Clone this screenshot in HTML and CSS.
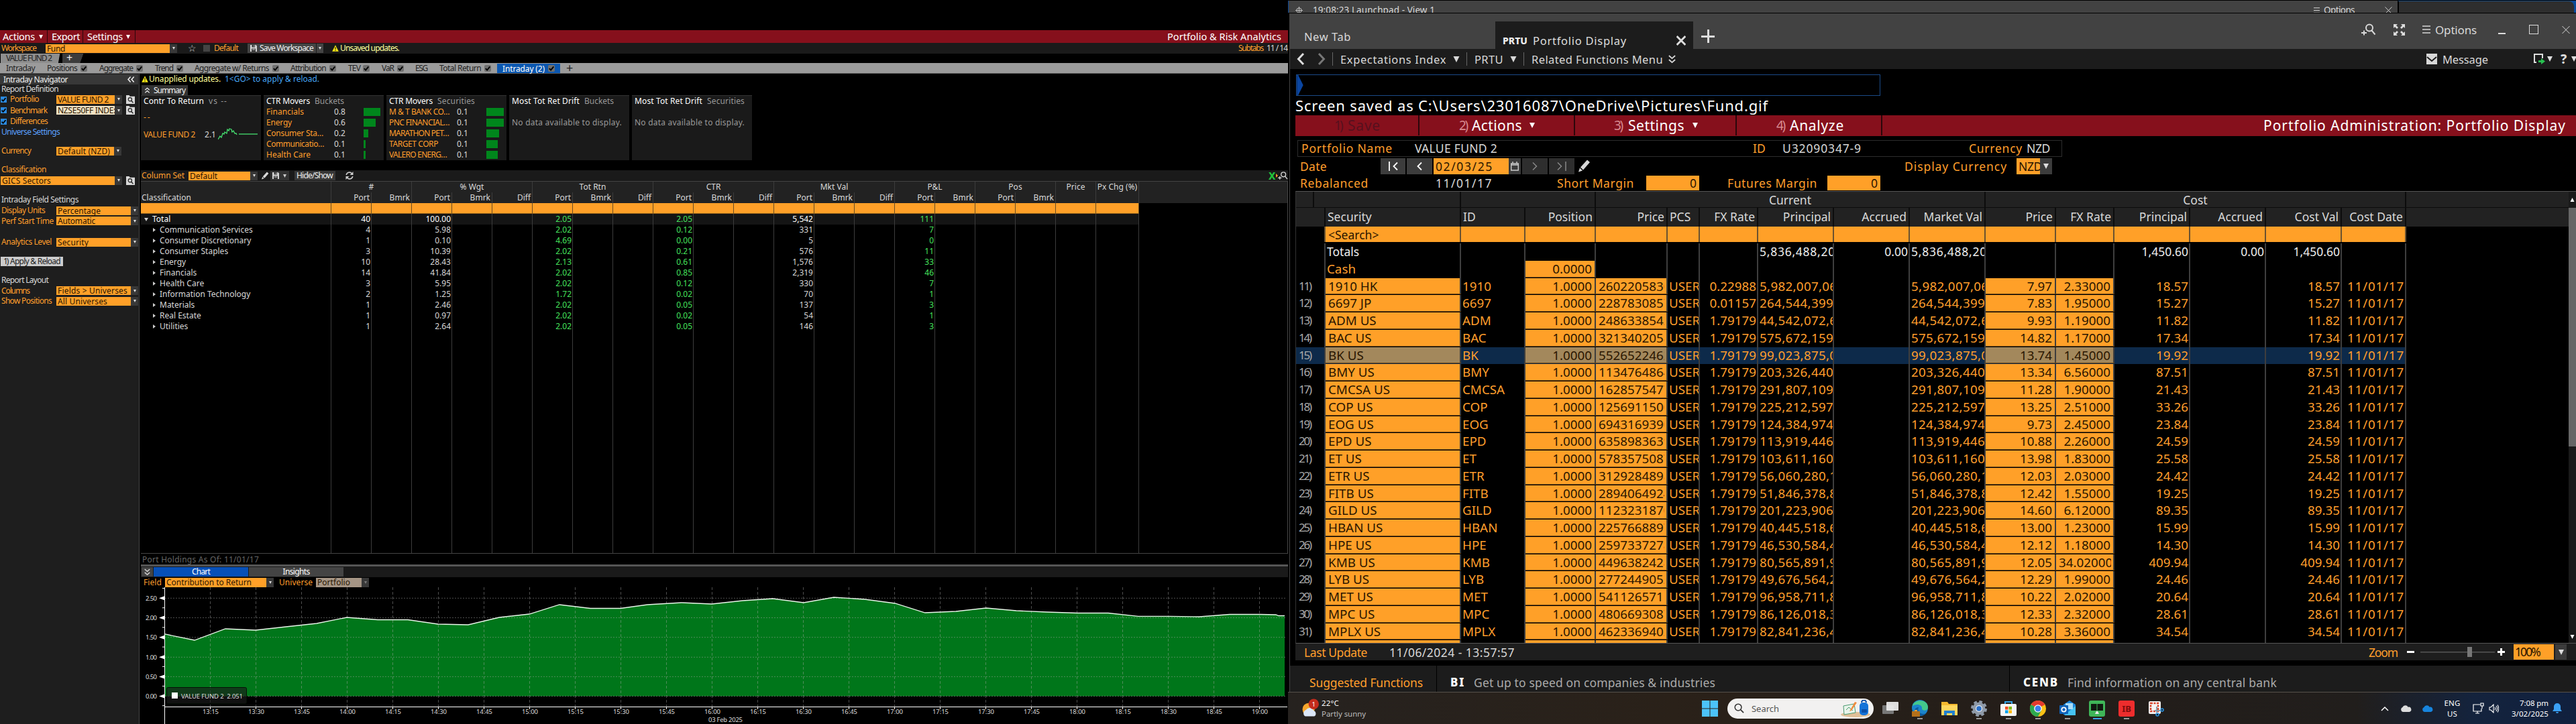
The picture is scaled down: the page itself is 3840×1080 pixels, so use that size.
FILE: index.html
```html
<!DOCTYPE html>
<html lang="en">
<head>
<meta charset="utf-8">
<title>Portfolio &amp; Risk Analytics</title>
<link rel="stylesheet" href="styles.css">
</head>
<body>
<svg class="sprite" width="0" height="0">
  <symbol id="check" viewBox="0 0 10 10"><path d="M1.8 5.2l2.3 2.3L8.3 2.4" fill="none" stroke="currentColor" stroke-width="1.9"/></symbol>
  <symbol id="lens" viewBox="0 0 14 14"><path d="M0 0h5l1 2h8v12H0z" fill="#d8d8d8"/><circle cx="6.3" cy="6.8" r="2.8" fill="none" stroke="#222" stroke-width="1.3"/><path d="M8.3 9l3 3" stroke="#222" stroke-width="1.5"/></symbol>
  <symbol id="lensplus" viewBox="0 0 22 18"><circle cx="12" cy="6.5" r="5" fill="none" stroke="currentColor" stroke-width="2"/><path d="M15.5 10.5l5 6M0 14h8M4 10.5v7" stroke="currentColor" stroke-width="2" fill="none"/></symbol>
  <symbol id="warn" viewBox="0 0 10 10"><path d="M5 .3L9.8 9.7H.2z" fill="#f5e614"/><path d="M5 3.2v3.3M5 7.5v1.2" stroke="#111" stroke-width="1.2"/></symbol>
  <symbol id="disk" viewBox="0 0 10 10"><path d="M0 0h8.3L10 1.6V10H0z" fill="#d5d5d5"/><path d="M2.5 0v3.4h4.6V0M2 10V5.6h6V10" fill="#3a3a3a"/><path d="M5.2.6h1v2h-1zM3 6.6h4v1H3z" fill="#d5d5d5"/></symbol>
  <symbol id="pencil" viewBox="0 0 18 18"><path d="M0 18l2-6 4 4zM3 11L13 0l4 3.6L7 15z" fill="#d8d8d8"/></symbol>
  <symbol id="dbl" viewBox="0 0 12 14"><path d="M1 1l5 4.5L11 1M1 7.5L6 12l5-4.5" fill="none" stroke="currentColor" stroke-width="2"/></symbol>
  <symbol id="tri" viewBox="0 0 10 10"><path d="M0 0h10L5 10z" fill="currentColor"/></symbol>
  <symbol id="left" viewBox="0 0 12 18"><path d="M10 1L2.5 9l7.500 8" fill="none" stroke="currentColor" stroke-width="3"/></symbol>
  <symbol id="cross" viewBox="0 0 12 12"><path d="M.5.5l11 11M11.500.5l-11 11" stroke="currentColor" fill="none"/></symbol>
  <symbol id="burger" viewBox="0 0 12 12"><path d="M0 1h12M0 6h12M0 11h12" stroke="currentColor" stroke-width="1.4"/></symbol>
  <symbol id="refresh" viewBox="0 0 12 12"><path d="M1.200 5A4.800 4.800 0 0 1 9.500 2.800M10.800 7A4.800 4.800 0 0 1 2.500 9.200" fill="none" stroke="#ccc" stroke-width="1.600"/><path d="M11.500 0v5h-5zM.5 12V7h5z" fill="#ccc"/></symbol>
  <symbol id="cloud" viewBox="0 0 18 11"><path d="M4 11a4 4 0 0 1-.6-7.600A5 5 0 0 1 12.500 3a4 4 0 0 1 2 8z" fill="currentColor"/></symbol>
</svg>

<main class="desk">
<section class="port">
  <header class="menu">
    <span data-w="48">Actions</span><svg class="t6"><use href="#tri"/></svg>
    <span data-w="42">Export</span>
    <span data-w="53">Settings</span><svg class="t6"><use href="#tri"/></svg>
    <span class="title" data-w="170">Portfolio &amp; Risk Analytics</span>
  </header>
  <div class="workspace">
    <span class="o" data-w="52">Workspace</span>
    <span class="sel"><b data-w="27">Fund</b><i></i></span>
    <span class="star">☆</span><span class="box"></span><span class="o" data-w="36">Default</span>
    <span class="save"><svg class="i10"><use href="#disk"/></svg><em data-w="80">Save Workspace</em><i></i></span>
    <svg class="i10"><use href="#warn"/></svg><span class="y" data-w="88">Unsaved updates.</span>
    <span class="subcount"><span class="o" data-w="37">Subtabs</span><span data-w="31">11 / 14</span></span>
  </div>
  <div class="tabs"><span class="tab1"><em data-w="68">VALUE FUND 2</em></span><span class="tab2">+</span></div>
  <nav class="subtabs">
    <span data-w="43">Intraday</span>
    <span data-w="45">Positions</span><i><svg><use href="#check"/></svg></i>
    <span data-w="50">Aggregate</span><i><svg><use href="#check"/></svg></i>
    <span data-w="27">Trend</span><i><svg><use href="#check"/></svg></i>
    <span data-w="111">Aggregate w/ Returns</span><i><svg><use href="#check"/></svg></i>
    <span data-w="53">Attribution</span><i><svg><use href="#check"/></svg></i>
    <span data-w="18">TEV</span><i><svg><use href="#check"/></svg></i>
    <span data-w="18">VaR</span><i><svg><use href="#check"/></svg></i>
    <span data-w="18">ESG</span>
    <span data-w="62">Total Return</span><i><svg><use href="#check"/></svg></i>
    <span class="active"><em data-w="63">Intraday (2)</em><i><svg><use href="#check"/></svg></i></span>
    <span class="plus">+</span>
  </nav>
  <div class="work">
    <aside class="side">
      <div class="head"><span data-w="96">Intraday Navigator</span><svg><use href="#dbl"/></svg></div>
      <div class="h14"><span data-w="85">Report Definition</span></div>
      <div class="pick o"><i class="cb"><svg><use href="#check"/></svg></i><span data-w="43">Portfolio</span><span class="sel"><b data-w="76">VALUE FUND 2</b><i></i></span><svg class="lens"><use href="#lens"/></svg></div>
      <div class="pick tall o"><i class="cb"><svg><use href="#check"/></svg></i><span data-w="55">Benchmark</span><span class="sel pale"><b data-w="86">NZSE50FF INDE:</b><i></i></span><svg class="lens"><use href="#lens"/></svg></div>
      <div class="pick o"><i class="cb"><svg><use href="#check"/></svg></i><span data-w="56">Differences</span></div>
      <div class="h15 blue"><span data-w="87">Universe Settings</span></div>
      <div class="field mid gap13 o"><span data-w="44">Currency</span><span class="sel"><b data-w="78">Default (NZD)</b><i></i></span></div>
      <div class="h14 gap13 o"><span data-w="67">Classification</span></div>
      <div class="pickwide gap1"><span class="sel"><b data-w="73">GICS Sectors</b><i></i></span><svg class="lens"><use href="#lens"/></svg></div>
      <div class="h14 gap14"><span data-w="115">Intraday Field Settings</span></div>
      <div class="field gap1 o"><span data-w="65">Display Units</span><span class="sel"><b data-w="64">Percentage</b><i></i></span></div>
      <div class="field short o"><span data-w="78">Perf Start Time</span><span class="sel"><b data-w="56">Automatic</b><i></i></span></div>
      <div class="field gap16 o"><span data-w="75">Analytics Level</span><span class="sel"><b data-w="46">Security</b><i></i></span></div>
      <button class="apply"><small data-w="6">1)</small><em data-w="75">Apply &amp; Reload</em></button>
      <div class="h14 gap14"><span data-w="70">Report Layout</span></div>
      <div class="field short gap1 o"><span data-w="42">Columns</span><span class="sel"><b data-w="104">Fields &gt; Universes</b><i></i></span></div>
      <div class="field o"><span data-w="75">Show Positions</span><span class="sel"><b data-w="74">All Universes</b><i></i></span></div>
    </aside>
    <section class="main">
      <div class="alert"><svg class="i10"><use href="#warn"/></svg><span class="y" data-w="107">Unapplied updates.</span><span class="sky" data-w="141">1&lt;GO&gt; to apply &amp; reload.</span></div>
      <div class="summary"><svg class="up"><use href="#dbl"/></svg><span data-w="47">Summary</span></div>
      <div class="cards">
        <article><h3><span data-w="90">Contr To Return</span><small data-w="28">vs --</small></h3>
          <p class="o dash">--</p>
          <p class="spark"><span class="o" data-w="77">VALUE FUND 2</span><span data-w="17">2.1</span>
          <svg width="60" height="20"><path d="M0 17l3-5 2 2 2-6 2 1 1-3 3 2 1-6 2 2 1-3 3 1 1 4 2-2 2 4 2 0 1 2" fill="none" stroke="#45e070" stroke-width="1.300"/><path d="M31 9h28" stroke="#45e070" stroke-width="1.300"/></svg></p></article>
        <article id="buckets"><h3><span data-w="65">CTR Movers</span><small data-w="44">Buckets</small></h3></article>
        <article id="securities"><h3><span data-w="65">CTR Movers</span><small data-w="56">Securities</small></h3></article>
        <article><h3><span data-w="101">Most Tot Ret Drift</span><small data-w="44">Buckets</small></h3><p class="none"><span data-w="164">No data available to display.</span></p></article>
        <article><h3><span data-w="101">Most Tot Ret Drift</span><small data-w="56">Securities</small></h3><p class="none"><span data-w="164">No data available to display.</span></p></article>
      </div>
      <div class="colset"><span class="o" data-w="64">Column Set</span><span class="sel"><b data-w="41">Default</b><i></i></span><svg class="pen"><use href="#pencil"/></svg><span class="dk"><svg class="i10"><use href="#disk"/></svg><svg class="t5"><use href="#tri"/></svg></span><span class="hs"><em data-w="54">Hide/Show</em></span><svg class="i12"><use href="#refresh"/></svg><span class="tools"><b>X</b><i></i><svg><use href="#lensplus"/></svg></span></div>
      <div class="ptable" id="ptable"></div>
      <div class="asof"><span data-w="174">Port Holdings As Of: 11/01/17</span></div>
      <div class="ctabs"><span class="cv"><svg><use href="#dbl"/></svg></span><span class="chosen"><em data-w="27">Chart</em></span><span class="idle"><em data-w="40">Insights</em></span></div>
      <div class="cfield o"><span data-w="27">Field</span><span class="sel"><b data-w="127">Contribution to Return</b><i></i></span><span data-w="50">Universe</span><span class="sel dim"><b data-w="49">Portfolio</b><i></i></span></div>
      <svg class="chart" id="chart" viewBox="210 876 1710 204" width="1710" height="204"></svg>
    </section>
  </div>
</section>

<section class="term">
  <div class="strip">
    <div class="lp"><svg viewBox="0 0 12 12"><circle cx="6" cy="6" r="4" fill="none" stroke="#ccc"/><path d="M6 0v12M0 6h12" stroke="#ccc"/></svg><span data-w="182">19:08:23 Launchpad - View 1</span><svg class="bg"><use href="#burger"/></svg><span data-w="46">Options</span><svg class="cx"><use href="#cross"/></svg></div>
    <div class="behind"><span></span><svg><use href="#cross"/></svg></div>
  </div>
  <div class="pane">
    <div class="titlebar">
      <span class="nt" data-w="70">New Tab</span>
      <div class="cur"><b data-w="37">PRTU</b><span data-w="140">Portfolio Display</span><svg><use href="#cross"/></svg></div>
      <span class="add"></span>
      <div class="winctl"><svg class="lp2"><use href="#lensplus"/></svg>
        <svg class="ex" viewBox="0 0 17 17"><path d="M0 0h6L4 2l3 3-2 2-3-3-2 2zM17 0v6l-2-2-3 3-2-2 3-3-2-2zM0 17v-6l2 2 3-3 2 2-3 3 2 2zM17 17h-6l2-2-3-3 2-2 3 3 2-2z" fill="#ddd"/></svg>
        <svg class="bg"><use href="#burger"/></svg><span data-w="62">Options</span><i class="mn"></i><i class="mx"></i><svg class="cx"><use href="#cross"/></svg></div>
    </div>
    <div class="navrow">
      <svg class="ar"><use href="#left"/></svg><svg class="ar fl"><use href="#left"/></svg><i></i>
      <span data-w="158">Expectations Index</span><svg class="t9"><use href="#tri"/></svg><i></i>
      <span data-w="43">PRTU</span><svg class="t9"><use href="#tri"/></svg><i></i>
      <span data-w="196">Related Functions Menu</span><svg class="d12"><use href="#dbl"/></svg>
      <svg class="mail" viewBox="0 0 16 16"><path d="M0 0h16v16H0z" fill="#d8d8d8"/><path d="M1 5l7 6 7-6" fill="none" stroke="#1c1c1c" stroke-width="2"/></svg><span data-w="68">Message</span>
      <svg class="exp" viewBox="0 0 17 16"><path d="M4 13H1V1h12v6" fill="none" stroke="#ddd" stroke-width="2"/><path d="M7 10h4V7l6 4.500-6 4.500v-3H7z" fill="#28c050"/></svg><svg class="t8"><use href="#tri"/></svg><b>?</b><svg class="t8"><use href="#tri"/></svg>
    </div>
    <div class="cmd"><svg viewBox="0 0 10 32"><path d="M0 0l2 0 8 16-8 16H0z" fill="#0a45a0"/></svg></div>
    <div class="msg"><span data-w="705">Screen saved as C:\Users\23016087\OneDrive\Pictures\Fund.gif</span></div>
    <div class="redbar">
      <span class="c1"><small data-w="11">1)</small><em data-w="49">Save</em></span>
      <span class="c2"><small data-w="12">2)</small><em data-w="75">Actions</em><svg><use href="#tri"/></svg></span>
      <span class="c3"><small data-w="12">3)</small><em data-w="84">Settings</em><svg><use href="#tri"/></svg></span>
      <span class="c4"><small data-w="12">4)</small><em data-w="81">Analyze</em></span>
      <span class="c5"><em data-w="451">Portfolio Administration: Portfolio Display</em></span>
    </div>
    <div class="info"><span class="o" data-w="136">Portfolio Name</span><span data-w="123">VALUE FUND 2</span><span class="o" data-w="19">ID</span><span data-w="118">U32090347-9</span><span class="o" data-w="80">Currency</span><span data-w="35">NZD</span></div>
    <div class="date o">
      <span data-w="40">Date</span>
      <b class="btn"><svg viewBox="0 0 16 14"><path d="M2 0v14M14 1.500L8.500 7l5.500 5.500" stroke="#fff" stroke-width="1.800" fill="none"/></svg></b>
      <b class="btn"><svg viewBox="0 0 16 14"><path d="M11 1.500L5.500 7l5.500 5.500" stroke="#fff" stroke-width="1.800" fill="none"/></svg></b>
      <b class="inp"><em data-w="86">02/03/25</em></b>
      <b class="btn"><svg viewBox="0 0 12 14"><path d="M.7 3h10.600v10H.7zM.7 5h10.600M3 0v3M9 0v3" stroke="#ccc" stroke-width="1.400" fill="none"/></svg></b>
      <b class="btn ghost"><svg viewBox="0 0 16 14"><path d="M5 1.500L10.500 7 5 12.500" stroke="#888" stroke-width="1.500" fill="none"/></svg></b>
      <b class="btn ghost"><svg viewBox="0 0 16 14"><path d="M14 0v14M2 1.500L7.500 7 2 12.500" stroke="#888" stroke-width="1.500" fill="none"/></svg></b>
      <svg class="pen"><use href="#pencil"/></svg>
      <span data-w="153">Display Currency</span><b class="inp"><em data-w="35">NZD</em></b><b class="btn"><svg class="t8"><use href="#tri"/></svg></b>
    </div>
    <div class="reb o"><span data-w="102">Rebalanced</span><span class="w" data-w="85">11/01/17</span><span data-w="115">Short Margin</span><b class="inp">0</b><span data-w="134">Futures Margin</span><b class="inp">0</b></div>
    <div class="holdwrap">
      <div class="hold" id="hold"></div>
      <div class="scroll"><svg class="ua"><use href="#tri"/></svg><i></i><svg class="da"><use href="#tri"/></svg></div>
    </div>
    <div class="foot"><span class="o" data-w="94">Last Update</span><span data-w="187">11/06/2024 - 13:57:57</span><span class="o" data-w="43">Zoom</span><i class="mi"></i><i class="sl"></i><i class="pl"></i><b class="inp"><em data-w="37">100%</em></b><b class="btn"><svg class="t8"><use href="#tri"/></svg></b></div>
    <div class="sugg"><span class="o" data-w="169">Suggested Functions</span><span class="dv"></span><b data-w="22">BI</b><span data-w="360">Get up to speed on companies &amp; industries</span><span class="dv"></span><b data-w="53">CENB</b><span data-w="312">Find information on any central bank</span></div>
  </div>
  <footer class="taskbar">
    <svg viewBox="0 0 26 30" class="wx"><circle cx="10" cy="16" r="9.500" fill="#f6a62c"/><path d="M5 27a5.500 5.500 0 0 1 1-10 7 7 0 0 1 12 1 5 5 0 0 1 1 9z" fill="#dbe6f7"/><circle cx="18" cy="8" r="8" fill="#c42b1c"/><text x="18" y="12" fill="#fff" font-size="10" text-anchor="middle">1</text></svg>
    <div class="two wt"><span data-w="26">22°C</span><span class="g" data-w="66">Partly sunny</span></div>
    <svg viewBox="0 0 24 24" class="ic"><path d="M0 0h11.500v11.500H0zM12.500 0H24v11.500H12.500zM0 12.500h11.500V24H0zM12.500 12.500H24V24H12.500z" fill="#4cc2f8"/></svg>
    <div class="pill"><svg viewBox="0 0 16 16"><circle cx="6.500" cy="6.500" r="5.200" fill="none" stroke="#333" stroke-width="1.600"/><path d="M10.500 10.500L15 15" stroke="#333" stroke-width="1.800"/></svg><span data-w="41">Search</span>
      <svg class="pic" viewBox="0 0 44 26"><ellipse cx="22" cy="22" rx="22" ry="4" fill="#e0c098"/><path d="M4 9l16-3 2 13-17 3z" fill="#e8f4ea" stroke="#4a9a70"/><path d="M8 15l4-4 6 5" fill="none" stroke="#4a9a70"/><path d="M21 3l3 1-8 12-3 1z" fill="#f08a3c"/><rect x="28" y="4" width="13" height="19" rx="5" fill="#1573d8"/><path d="M31 14h8v5h-8z" fill="#0b4fa8"/><path d="M31 4a3.500 3.500 0 0 1 7 0" fill="none" stroke="#0b4fa8" stroke-width="2"/></svg></div>
    <svg viewBox="0 0 24 24" class="ic"><rect x="0" y="7" width="17" height="13" rx="1" fill="#777"/><rect x="6" y="2" width="18" height="13" rx="1" fill="#eee" opacity=".92"/></svg>
    <svg viewBox="0 0 24 24" class="ic run"><circle cx="12" cy="11" r="12" fill="#1b84cc"/><path d="M1 8C4-3 24-2 24 10c0 6-9 6-9 2 1-6-8-8-14-4z" fill="#43c98c"/><path d="M10 10c-3 8 6 12 11 9-4 6-15 4-17-3 0-4 3-6 6-6z" fill="#0c5a9e"/><path d="M0 16h12v8H0z" fill="#b5701a"/><path d="M4 14h4v2H4z" fill="#e0a040"/></svg>
    <svg viewBox="0 0 24 24" class="ic"><path d="M0 2h9l2 3h13v16H0z" fill="#f5b82e"/><path d="M0 7h24v15H0z" fill="#ffd75e"/><path d="M4 22v-7h16v7h-4v-3H8v3z" fill="#2080d0"/></svg>
    <svg viewBox="0 0 24 24" class="ic run"><circle cx="12" cy="12" r="9.500" fill="#8f9aa8"/><circle cx="12" cy="12" r="10" fill="none" stroke="#8f9aa8" stroke-width="4" stroke-dasharray="4.500 3.350"/><circle cx="12" cy="12" r="5" fill="#e8eef5"/><circle cx="12" cy="12" r="3.800" fill="#2a6fc8"/></svg>
    <svg viewBox="0 0 24 24" class="ic run"><path d="M7 6V2h10v4" fill="none" stroke="#35a4e8" stroke-width="2"/><rect y="5" width="24" height="18" rx="2" fill="#f5f5f5"/><path d="M7 9h4.500v4.500H7z" fill="#f25022"/><path d="M12.500 9H17v4.500h-4.500z" fill="#7fba00"/><path d="M7 14.500h4.500V19H7z" fill="#00a4ef"/><path d="M12.500 14.500H17V19h-4.500z" fill="#ffb900"/></svg>
    <svg viewBox="0 0 24 24" class="ic run"><circle cx="12" cy="12" r="12" fill="#fbc116"/><path d="M12 12L1.600 6A12 12 0 0 1 22.400 6z" fill="#e33b2e"/><path d="M12 12L1.600 6A12 12 0 0 0 12 24l5-9z" fill="#2da94f"/><circle cx="12" cy="12" r="5.800" fill="#fff"/><circle cx="12" cy="12" r="4.500" fill="#3b7ded"/></svg>
    <svg viewBox="0 0 24 24" class="ic run"><path d="M6 6L15 0l9 6v15H6z" fill="#1a86dc"/><path d="M24 8v14H7z" fill="#46c3f3"/><path d="M9 4h11v9H9z" fill="#a9dcf8"/><rect y="7" width="13" height="13" rx="1" fill="#0f62b8"/><circle cx="6.500" cy="13.500" r="3.200" fill="none" stroke="#fff" stroke-width="1.800"/></svg>
    <svg viewBox="0 0 24 24" class="ic run front"><rect width="24" height="24" rx="3" fill="#3fb558"/><path d="M3 5h8.500v10H3zM12.500 5H21v10h-8.500z" fill="#101810"/><path d="M9 20h6l-2-4h-2z" fill="#e8e8e8"/></svg>
    <svg viewBox="0 0 24 24" class="ic run"><rect width="24" height="24" rx="3" fill="#ee2d2d"/><text x="12" y="17" font-size="13" font-weight="700" text-anchor="middle" fill="#7c0c0c">IB</text></svg>
    <svg viewBox="0 0 24 24" class="ic snip"><rect x="1" y="1" width="18" height="19" rx="2" fill="#f4f4f4"/><path d="M4 4h11v12H4z" fill="none" stroke="#d8432a" stroke-width="2.500" stroke-dasharray="3 1.500"/><path d="M13 9v9M10 15h10" stroke="#8a9aa8" stroke-width="2"/><circle cx="21" cy="14" r="2" fill="none" stroke="#2590e0" stroke-width="1.600"/><circle cx="14" cy="21" r="2" fill="none" stroke="#2590e0" stroke-width="1.600"/></svg>
    <div class="tray">
      <svg viewBox="0 0 12 8" class="cu"><path d="M1 7l5-5 5 5" fill="none" stroke="#fff" stroke-width="1.500"/></svg>
      <svg class="cl wh"><use href="#cloud"/></svg><svg class="cl bl"><use href="#cloud"/></svg>
      <div class="two en"><span data-w="24">ENG</span><span data-w="15">US</span></div>
      <svg viewBox="0 0 17 17" class="mo"><path d="M11 3H1v10h12V9M4 16h6M7 13v3M12 1h4v4h-4zM14 5v4" fill="none" stroke="#fff" stroke-width="1.200"/></svg>
      <svg viewBox="0 0 15 14" class="sp"><path d="M1 5h2l4-4v12L3 9H1zM9 5q1.500 2 0 4M11 3q3 4 0 8M13 1.500q3.500 5.500 0 11" fill="none" stroke="#fff" stroke-width="1.100"/></svg>
      <div class="two tm"><span data-w="43">7:08 pm</span><span data-w="55">3/02/2025</span></div>
      <svg viewBox="0 0 14 16" class="be"><path d="M7 0a5 5 0 0 1 5 5v4l2 3H0l2-3V5a5 5 0 0 1 5-5zM5 13h4a2 2 0 0 1-4 0z" fill="#3aa0f5"/></svg>
    </div>
  </footer>
</section>
</main>
<script src="app.js"></script>
</body>
</html>
```
FILE: styles.css
```css
*{box-sizing:border-box}
body{margin:0;background:#000;color:#d8d8d8;font:12px "Noto Sans","Open Sans",sans-serif;overflow:hidden}
b,i,em,small,h3,p{font:inherit;margin:0}
svg{display:block;flex:none}
span,em,b,small{white-space:nowrap}
.sprite{position:absolute}
.desk{display:flex;width:3840px;height:1080px;overflow:hidden}
.o{color:#ff9e2c}.y{color:#ffff9a}.blue{color:#5aa0ff}.sky{color:#46a6f6}.w{color:#d8d8d8}
.i10{width:10px;height:10px}.i12{width:12px;height:12px}.t6{width:6px;height:6px}.t5{width:5px;height:5px}.t8{width:8px;height:8px;color:#ddd}.t9{width:10px;height:9px}
[data-w]{display:inline-block}

/* analytics window */
.port{width:1920px;height:1080px;padding-top:45px;flex:none;display:flex;flex-direction:column;line-height:14px}
.menu{height:19px;background:#86101c;color:#fff;font-size:14.500px;display:grid;grid-template-columns:54px 19px 53px 58px auto 1fr;align-items:center;padding:0 10px 0 4px;line-height:19px;
background-image:linear-gradient(#2b070b,#2b070b),linear-gradient(#2b070b,#2b070b),linear-gradient(#2b070b,#2b070b);background-size:1px 19px;background-position:70px 0,123px 0,201px 0;background-repeat:no-repeat}
.menu .title{justify-self:end}
.workspace{height:16px;background:#1a1a1a;display:grid;grid-template-columns:66px 208px 27px 16px 50px 126px 12px 88px 1fr;align-items:center;padding-left:2px}
.sel{display:flex;height:13px;line-height:13px;color:#2a1600;min-width:0}
.sel b{background:#ffa028;flex:1;padding-left:2px;min-width:0}
.pale b{overflow-x:clip}
.sel>i{width:11px;background:#383838;flex:none;display:flex;align-items:center;justify-content:center}
.sel>i::after,.save>i::after{content:"";border:2.500px solid transparent;border-top:4px solid #ddd;border-bottom:0}
.workspace .sel{width:196px}
.star{font-size:14px;padding-left:4px;line-height:14px;font-family:"DejaVu Sans",sans-serif}
.box{width:10px;height:10px;background:#444}
.save{display:grid;grid-template-columns:14px 84px 11px;width:113px;background:#444;height:14px;padding-left:4px;align-items:center;color:#eee}
.save>i{border-left:1px solid #1a1a1a;height:14px;display:flex;align-items:center;justify-content:center}
.subcount{display:flex;gap:5px;justify-content:flex-end;padding-right:1px}
.tabs{height:14px;display:flex;gap:2px;padding-left:1px}
.tab1{width:90px;height:14px;background:linear-gradient(100deg,#8e8e8e 95%,#000 96%);color:#222;padding-left:8px}
.tab2{width:31px;height:14px;background:linear-gradient(110deg,#3c3c3c 86%,#000 88%);color:#eee;padding-left:6px;font-size:16px;line-height:12px}
.subtabs{height:16px;background:#9b9b9b;border-bottom:1px solid #555;color:#222;padding-left:9px;display:grid;align-items:center;line-height:15px;
grid-template-columns:61px 50px 28px 55px 28px 32px 27px 116px 27px 58px 28px 22px 28px 23px 27px 36px 67px 19px 103px 30px}
.subtabs i{width:10px;height:10px;background:#6f6f6f;border-radius:2px;color:#000;display:block}
.subtabs i svg{width:10px;height:10px}
.active{background:#0b57b0;color:#fff;display:grid;grid-template-columns:68px 10px;padding-left:8px;width:94px;height:14px;align-items:center}
.plus{font-size:18px}
.work{display:flex;flex:1;min-height:0}
.side{width:210px;background:#1e1e1e;border-right:2px solid #000;box-shadow:inset -1px 0 #444;padding:1px 2px 0 0;flex:none}
.side>div{display:flex;align-items:center;padding-left:2px}
.head{height:15px;background:#383838;color:#eee;justify-content:space-between}
.side .head{padding:0 6px 0 5px}
.head svg{width:10px;height:11px;transform:rotate(90deg)}
.h14{height:14px}.h15{height:15px}.gap1{margin-top:1px}.gap13{margin-top:13px}.gap14{margin-top:14px}.gap16{margin-top:16px}
.side>.pick{display:grid;grid-template-columns:14px 69px 104px 14px;padding-left:1px;height:16px}
.side>.tall{height:17px}
.cb{width:9px;height:9px;background:#2b8ae0;color:#000}.cb svg{width:9px;height:9px}
.pick .sel{width:98px}.pale b{background:#f0e2c4}
.lens{width:13px;height:13px}
.side>.pickwide{display:grid;grid-template-columns:187px 13px;padding-left:1px;height:16px}
.pickwide .sel{width:181px}
.side>.field{display:grid;grid-template-columns:82px 122px;height:16px}
.side>.short{height:15px}
.mid .sel{width:97px}
.apply{display:flex;gap:4px;border:0;margin:14px 0 0 1px;padding:0 0 0 4px;width:93px;height:14px;background:#ccc;color:#222;font:inherit;align-items:center}
.main{width:1710px;display:flex;flex-direction:column}
.alert{height:16px;display:grid;grid-template-columns:11px 113px 1fr;align-items:center;padding-left:1px}
.summary{width:69px;height:15px;margin:1px 0 0 1px;background:#333;color:#eee;display:flex;gap:5px;align-items:center;padding-left:4px}
.summary svg{width:9px;height:9px;transform:rotate(180deg)}
.cards{height:97px;display:flex;gap:4px}
.cards article{width:179px;background:#1a1a1a;border-top:1px solid #333;padding-left:4px}
.cards h3{display:flex;gap:7px;height:16px;align-items:center;color:#fff}
.cards small{color:#999}
.dash{padding-top:9px;letter-spacing:2px}
.spark{display:grid;grid-template-columns:91px 20px 60px;align-items:center;margin-top:9px}
.mover{display:grid;grid-template-columns:101px 44px 1fr;height:16px;align-items:center}
.mover i{height:12px;background:#00861c}
.none{color:#999;padding-top:17px}
.colset{height:16px;margin-top:15px;background:#1a1a1a;display:grid;grid-template-columns:70px 112px 10px 36px 76px 1fr auto;align-items:center;padding-left:1px}
.colset .sel{width:103px}
.colset .pen{width:11px;height:12px;margin-left:-3px}
.dk{display:flex;gap:6px;align-items:center;background:#333;width:28px;height:14px;padding-left:3px;color:#ccc}
.hs{background:#383838;color:#eee;width:61px;height:14px;padding-left:3px}
.tools{display:flex;align-items:center}
.tools b{color:#22c03a;font-weight:800;font-size:15px;width:11px}
.tools i{border:3px solid transparent;border-left-color:#ff9e2c;border-right:0}
.tools svg{width:15px;height:14px}
.ptable{height:556px;border:1px solid #444;border-width:1px 1px 1px 0;display:grid;grid-template-columns:284px repeat(19,60px) 64px 1fr;grid-template-rows:16px 16px 16px repeat(11,16px) 1fr;line-height:16px}
.ptable>div{border-right:1px solid #3c3c3c;text-align:right;padding-right:1px;white-space:nowrap}
.ptable .gh,.ptable .hh{background:#222}
.ptable .gh{text-align:center;padding:0}
.ptable .hh{padding-right:2px}
.ptable .first{text-align:left;padding-left:1px}
.ptable .q{background:#ffa028;border-right-color:#6b4c20;border-bottom:1px solid #8a5a1a}
.ptable .tot{background:#141414;color:#fff}
.ptable .nb{border-right:0}
.ptable .up{color:#45e35c}
.ptable .name{text-align:left;display:flex;align-items:center;padding-left:18px;gap:6px}
.ptable .name.tot{padding-left:5px}
.name::before{content:"";border:3px solid transparent;border-left:4px solid #ccc;border-right:0}
.name.tot::before{border:3px solid transparent;border-top:5px solid #ccc;border-bottom:0}
.asof{height:16px;color:#666;padding-left:2px;line-height:17px}
.ctabs{height:19px;border-top:3px solid #555;display:flex;gap:1px;background:#1a1a1a;padding:1px 0 1px 1px;color:#fff}
.ctabs>span{display:flex;justify-content:center;align-items:center}
.cv{width:17px;background:#444}.cv svg{width:9px;height:11px;color:#ccc}
.chosen{width:141px;background:#0750b8}.idle{width:141px;background:#444}
.cfield{height:15px;display:grid;grid-template-columns:32px 170px 55px 1fr;align-items:center;padding-left:4px}
.cfield .sel{width:162px;height:14px}.cfield .dim{width:79px}.dim b{background:#a59585}.dim>i::after{opacity:.4}
.chart text{fill:#ddd;font-size:9.500px}

/* terminal window */
.term{width:1920px;height:1080px;display:flex;flex-direction:column;color:#d8d8d8;font-size:16.500px}
.strip{height:20px;display:flex;border-top:1px solid #000;border-bottom:1px solid #000;padding-left:1px;background:#0a4a98;overflow:hidden;flex:none}
.lp{width:1653px;background:#424242;display:grid;grid-template-columns:26px 1492px 15px 91px 14px;padding-left:10px;align-items:center;font-size:13.500px;height:28px;flex:none}
.lp svg{width:11px;height:11px}.lp .bg{width:9px;height:9px}
.behind{width:263px;background:#2e2e2e;border-left:2px solid #000;border-top:1px solid #1d4d80;border-radius:0 8px 0 0;display:flex;gap:39px;padding:18px 0 0 187px;height:30px;color:#aaa}
.behind span{width:10px;height:10px;border:1px solid #999}.behind svg{width:10px;height:10px}
.pane{height:1012px;border-left:1px solid #444;margin-left:2px;display:flex;flex-direction:column;flex:none}
.titlebar{height:53px;background:#424242;display:grid;grid-template-columns:285px 295px 987px 1fr;padding-left:21px;flex:none}
.nt{line-height:69px}
.cur{background:#1c1c1c;margin-top:12px;display:grid;grid-template-columns:45px 214px 15px;padding-left:11px;align-items:center;color:#ddd}
.cur b,.sugg b{font-weight:800;color:#eee}
.cur b{font-size:14px}.cur svg{width:14px;height:15px;stroke-width:2.500}
.add{margin:24px 0 0 12px;width:20px;height:20px;background:linear-gradient(#ddd,#ddd) 50%/20px 3px no-repeat,linear-gradient(#ddd,#ddd) 50%/3px 20px no-repeat}
.winctl{display:grid;grid-template-columns:48px 43px 19px 94px 46px 49px 12px;padding:12px 0 0 9px;height:36px;align-items:center;font-size:17px}
.lp2{width:22px;height:18px}.ex{width:17px;height:17px}.bg{width:12px;height:12px}
.mn{width:11px;height:2px;background:#ddd;margin-top:12px}.mx{width:14px;height:14px;border:1.500px solid #ddd}.cx{width:12px;height:13px}
.navrow{height:30px;background:#1c1c1c;flex:none;display:grid;align-items:center;padding-left:10px;grid-template-columns:31px 22px 12px 168px 20px 12px 53px 20px 12px 204px 1130px 24px 136px 20px 20px 16px 10px}
.navrow i{width:1px;height:20px;background:#666}
.ar{width:12px;height:20px;color:#ddd}.fl{transform:scaleX(-1);color:#777}
.d12{width:11px;height:13px}.mail{width:16px;height:16px}.exp{width:17px;height:16px}
.navrow b{font-weight:800;font-size:19px}
.cmd{width:871px;height:32px;border:1px solid #1b4a88;margin:8px 0 0 9px;flex:none}
.cmd svg{width:10px;height:30px}
.msg{height:29px;font-size:22px;line-height:28px;color:#fff;padding-left:8px;flex:none}
.redbar{height:31px;margin-left:8px;flex:none;background:#86101c;display:grid;grid-template-columns:185px 232px 241px 217px 1fr;color:#fff;font-size:21px;line-height:28px}
.redbar>span{border-right:2px solid #2b070b;display:grid;align-items:center;align-content:center;height:30px}
.redbar small{color:#d88a90;font-size:19px}
.redbar svg{width:8px;height:8px}
.c1{padding-left:58px;grid-template-columns:20px 1fr}.c1 em,.redbar .c1 small{color:#56101e}
.c2{padding-left:59px;grid-template-columns:19px 86px 1fr}.c3{padding-left:58px;grid-template-columns:21px 96px 1fr}.c4{padding-left:59px;grid-template-columns:20px 1fr}
.redbar .c5{border:0;justify-content:end;padding-right:15px}
.info{margin:6px 0 0 11px;width:1140px;height:25px;border:1px solid #2c2c2c;flex:none;display:grid;grid-template-columns:169px 504px 44px 278px 86px 40px;padding-left:5px;align-items:center;font-size:17.500px;line-height:23px}
.date,.reb{font-size:17.500px;display:grid;align-items:center;flex:none;padding-left:15px}
.date{height:25px;margin-top:1px;grid-template-columns:120px 39px 40px 112px 20px 40px 44px 486px 167px 35px 18px}
.btn{height:24px;background:#3c3c3c;display:flex;align-items:center;justify-content:center}
.date .btn{margin-right:2px}
.btn svg{height:14px;width:16px}.btn .t8{width:8px;height:8px}
.date .btn:last-child{margin-right:0}
.date .ghost{background:#2e2e2e}
.date .ghost:nth-child(7){width:38px}
.date .pen{width:18px;height:19px}
.inp{background:#ffa028;color:#2a1600;height:24px;line-height:24px;padding-left:3px;overflow-x:clip}
.inp em{vertical-align:top}
.reb{height:25px;grid-template-columns:202px 181px 133px 121px 149px 79px}
.reb .inp{height:22px;line-height:22px;width:79px;text-align:right;padding-right:4px}
.holdwrap{height:675px;margin-left:8px;display:flex;border-top:1px solid #555;border-bottom:1px solid #555;border-left:1px solid #333;flex:none;overflow:hidden}
.hold{width:1898px;overflow:hidden;height:673px}
.hr{display:grid;grid-template-columns:27px 17px 202px 96px 105px 107px 48px 87px 113px 113px 113px 105px 87px 113px 113px 113px 96px 1fr;height:25.750px;line-height:24px;font-size:18.800px;color:#ff9e2c}
.hr>div{border-right:2px solid #3e3e3e;overflow-x:clip;white-space:nowrap;padding:0 1px 0 2px}
.hr>div:last-child,.hr>div:first-child,.hr.data>div:nth-child(1){border-right:0}
.hr .r{text-align:right}
.hr .fit{letter-spacing:.3px}
.hr .e{background:#ffa028;color:#2a1600;height:23.750px;box-shadow:0 1px #6b4414;padding:0 4px}
.hr .cut{overflow:clip;overflow-clip-margin:content-box;padding:0 3px 0 4px}
.hr .num{color:#aaa;padding-left:4px;font-size:17px}
.hr.h1,.hr.h2{background:#222;color:#d8d8d8;font-size:17.500px}
.hr.h1>div,.hr.h2>div{border-color:#0c0c0c;padding:0 3px}
.hr.h1{height:24px;border-bottom:1px solid #0c0c0c;grid-template-columns:27px 219px 201px 581px 627px 1fr;text-align:center}
.hr.h1>div:first-child{border-right:2px solid #0c0c0c}
.hr.h2{height:28px;line-height:27px}
.hr.q{height:25px}
.hr.q>div{background:#ffa028;color:#2a1600;height:23px;border-right-color:#6a5230;font-size:17.500px;padding-left:4px;line-height:24px}
.hr.q>.z{background:none}
.hr.tt{color:#eee;font-size:17.500px}
.hr.s{background:#0d2a4a}
.hr.s>div:last-child{background:#000}
.hr.s .e{background:#a3885c}
.scroll{width:11px;background:#1a1a1a;display:flex;flex-direction:column;align-items:center;color:#fff}
.scroll svg{width:7px;height:6px}.ua{transform:rotate(180deg);margin-top:9px}
.scroll i{width:11px;height:356px;background:#666;margin-top:9px}
.da{margin-top:281px}
.foot{height:25px;margin-left:8px;background:#1e1e1e;flex:none;display:grid;grid-template-columns:127px 1460px 57px 20px 115px 24px 62px 18px;padding-left:13px;align-items:center;font-size:17.500px}
.foot .inp{height:23px;line-height:23px;width:60px;padding-left:2px}
.foot .btn{height:23px;width:17px}
.mi{width:11px;height:3px;background:#fff}
.sl{width:111px;height:15px;background:linear-gradient(#777,#777) 70px 0/7px 15px no-repeat,linear-gradient(#555,#555) 0 50%/111px 1.500px no-repeat}
.pl{width:11px;height:11px;background:linear-gradient(#fff,#fff) 50%/11px 3px no-repeat,linear-gradient(#fff,#fff) 50%/3px 11px no-repeat}
.sugg{height:39px;margin-top:8px;background:#1c1c1c;flex:none;display:grid;grid-template-columns:189px 21px 35px 798px 21px 66px 1fr;padding-left:29px;line-height:50px;font-size:17.500px;color:#aaa;overflow:hidden}
.dv{width:1px;height:39px;background:#000}
.sugg b{color:#fff;font-size:17px}
.taskbar{height:48px;border-top:1px solid #55504a;background:linear-gradient(90deg,#26221f,#2a2119 30%,#231d19 60%,#211e1c 83%,#14233d 92%,#10203e);display:flex;align-items:center;padding-left:21px;font-size:11.500px;color:#fff}
.wx{width:25px;height:30px}
.two{display:grid;line-height:16px;height:32px}
.wt{margin-left:4px;width:567px}.two .g{color:#bbb}
.taskbar .ic{width:24px;height:24px;margin-right:20px;overflow:visible}
.pill{width:218px;height:30px;border-radius:15px;background:#f2f1f0;color:#555;display:grid;grid-template-columns:26px 133px 44px;align-items:center;padding-left:10px;margin:0 13px 0 -6px;font-size:13px;flex:none}
.taskbar .pill svg{width:15px;height:15px}.taskbar .pill .pic{width:44px;height:26px}
.taskbar .run{height:32px;padding:4px 0;background:linear-gradient(#999,#999) 50% 100%/8px 2px no-repeat}
.taskbar .front{background:linear-gradient(#3aa0e8,#3aa0e8) 50% 100%/13px 2px no-repeat}
.taskbar .snip{margin-right:0}
.tray{margin-left:auto;display:grid;grid-template-columns:29px 32px 33px 43px 24px 33px 62px 14px;align-items:center;padding-right:21px}
.cu{width:12px;height:8px}.cl{width:17px;height:10px}.wh{color:#ddd}.bl{color:#1784dd}
.mo{width:17px;height:17px}.sp{width:15px;height:14px}.be{width:14px;height:16px}
.en{justify-items:center;width:25px}.tm{justify-items:end;width:56px}
```
FILE: app.js
```js
const el = (cls, text, parent) => {
  const d = document.createElement('div');
  d.className = cls || '';
  d.textContent = text || '';
  parent.append(d);
  return d;
};

// Summary cards
const movers = {
  buckets: [['Financials', 0.8, 25, 56], ['Energy', 0.6, 18, 38], ['Consumer Sta…', 0.2, 7, 85], ['Communicatio…', 0.1, 3, 86], ['Health Care', 0.1, 3, 66]],
  securities: [['M & T BANK CO…', 0.1, 26, 90], ['PNC FINANCIAL…', 0.1, 26, 90], ['MARATHON PET…', 0.1, 19, 89], ['TARGET CORP', 0.1, 17, 73], ['VALERO ENERG…', 0.1, 17, 86]]
};
for (const id in movers) {
  const card = document.getElementById(id);
  for (const [name, v, bar, w] of movers[id]) {
    const row = el('mover', '', card);
    row.innerHTML = `<span class="o" data-w="${w}"></span><span>${v}</span><i style="width:${bar}px"></i>`;
    row.firstChild.textContent = name;
  }
}

// Sector table
const pt = document.getElementById('ptable');
const groups = [['', 1], ['#', 2], ['% Wgt', 3], ['Tot Rtn', 3], ['CTR', 3], ['Mkt Val', 3], ['P&L', 2], ['Pos', 2], ['Price', 1], ['Px Chg (%)', 1], ['', 1]];
groups.forEach(([t, n], i) => {
  const c = el('gh' + (i === 10 ? ' nb' : ''), t, pt);
  c.style.gridColumn = 'span ' + n;
});
['Classification', 'Port', 'Bmrk', 'Port', 'Bmrk', 'Diff', 'Port', 'Bmrk', 'Diff', 'Port', 'Bmrk', 'Diff', 'Port', 'Bmrk', 'Diff', 'Port', 'Bmrk', 'Port', 'Bmrk', '', '', '']
  .forEach((t, i) => el('hh' + (i ? '' : ' first') + (i === 21 ? ' nb' : ''), t, pt));
for (let i = 0; i < 22; i++) el(i < 21 ? 'q' : 'nb', '', pt);
const sectors = [
  ['Total', '40', '100.00', '2.05', '2.05', '5,542', '111'],
  ['Communication Services', '4', '5.98', '2.02', '0.12', '331', '7'],
  ['Consumer Discretionary', '1', '0.10', '4.69', '0.00', '5', '0'],
  ['Consumer Staples', '3', '10.39', '2.02', '0.21', '576', '11'],
  ['Energy', '10', '28.43', '2.13', '0.61', '1,576', '33'],
  ['Financials', '14', '41.84', '2.02', '0.85', '2,319', '46'],
  ['Health Care', '3', '5.95', '2.02', '0.12', '330', '7'],
  ['Information Technology', '2', '1.25', '1.72', '0.02', '70', '1'],
  ['Materials', '1', '2.46', '2.02', '0.05', '137', '3'],
  ['Real Estate', '1', '0.97', '2.02', '0.02', '54', '1'],
  ['Utilities', '1', '2.64', '2.02', '0.05', '146', '3']
];
const slot = { 0: 0, 1: 1, 3: 2, 6: 3, 9: 4, 12: 5, 15: 6 };
sectors.forEach((s, r) => {
  for (let c = 0; c < 22; c++) {
    const k = slot[c];
    let cls = c === 0 ? 'name ' : '';
    if (r === 0 && c < 21) cls += 'tot ';
    if (k === 3 || k === 4 || k === 6) cls += 'up ';
    if (c === 21) cls += 'nb';
    el(cls, k === undefined ? '' : s[k], pt);
  }
});
for (let i = 0; i < 22; i++) el(i === 21 ? 'nb' : '', '', pt);

// Return chart
const ys = [[2.5, 892.3], [2, 921.5], [1.5, 950.7], [1, 980.3], [0.5, 1009.4], [0, 1038.5]];
const pts = '245,945.7 290,955 336,938 381,940 426,935 472,930 517,921 563,924.500 608,924.500 653,931 698,932 744,921 789,916 834,902 880,907.500 925,907.500 965,902 1016,899 1061,901 1107,896 1152,893 1198,899 1243,891 1289,894 1334,900 1379,914 1425,912 1470,907 1515,911 1560,913 1606,914.500 1652,914.500 1697,919.300 1743,919.300 1788,920 1833,916.500 1878,916.500 1902,917 1906,918.500 1915,918.500';
let s = `<polygon points="${pts} 1915,1038.500 245,1038.500" fill="#00761a"/>`;
for (const [v, y] of ys) {
  s += `<path d="M246 ${y}H1918" stroke="#aaa" stroke-opacity=".45" stroke-dasharray="2 2"/>` +
       `<path d="M237 ${y}l8-3v6z" fill="#fff"/><text x="217" y="${y + 3.500}" textLength="17">${v.toFixed(2)}</text>`;
}
for (let i = 0; i < 7; i++) s += `<path d="M242 ${877.5 + i * 29.2}h4" stroke="#fff"/>`;
for (let i = 0; i < 24; i++) {
  const x = 313.5 + 68 * i, m = 13 * 60 + 15 * (i + 1);
  const t = Math.floor(m / 60) + ':' + String(m % 60).padStart(2, '0');
  s += `<path d="M${x} 876V1054" stroke="#aaa" stroke-opacity=".45" stroke-dasharray="4 3"/><path d="M${x} 1054v4" stroke="#fff"/>` +
       `<text x="${x - 11.5}" y="1065" textLength="24">${t}</text>`;
}
s += `<polyline points="${pts}" fill="none" stroke="#e8f5e8" stroke-width="1.300"/>` +
  `<path d="M245.500 876V1080M245 1054.500H1919" stroke="#fff" fill="none"/>` +
  `<text x="1056" y="1077" textLength="51">03 Feb 2025</text>` +
  `<rect x="248.500" y="1025.500" width="119" height="24" rx="2" fill="#1a1a1a" fill-opacity=".65" stroke="#061006"/>` +
  `<rect x="256" y="1033" width="9" height="9" fill="#fff"/><text x="270" y="1042" textLength="92">VALUE FUND 2&#160; 2.051</text>`;
document.getElementById('chart').innerHTML = s;

// Holdings table
const hold = document.getElementById('hold');
const line = cls => el('hr ' + cls, '', hold);
const h1 = line('h1');
['', '', '', 'Current', 'Cost', ''].forEach(t => el('', t, h1));
const h2 = line('h2');
['', '', 'Security', 'ID', 'Position', 'Price', 'PCS', 'FX Rate', 'Principal', 'Accrued', 'Market Val', 'Price', 'FX Rate', 'Principal', 'Accrued', 'Cost Val', 'Cost Date', '']
  .forEach((t, i) => el([2, 3, 6].includes(i) ? '' : 'r', t, h2));
const q = line('q');
for (let i = 0; i < 18; i++) el(i < 2 || i === 17 ? 'z' : '', i === 2 ? '<Search>' : '', q);
const tt = line('tt data');
['', '', 'Totals', '', '', '', '', '', '5,836,488,20', '0.00', '5,836,488,20', '', '', '1,450.60', '0.00', '1,450.60', '', '']
  .forEach((t, i) => {
    const c = el([9, 13, 14, 15].includes(i) ? 'r' : '', t, tt);
    if (i === 8 || i === 10) c.innerHTML = `<span data-w="113">${t}</span>`;
  });
const cash = line('data');
for (let i = 0; i < 18; i++) el(i === 4 ? 'e r' : '', i === 2 ? 'Cash' : i === 4 ? '0.0000' : '', cash);
const rows = `1910 HK|2602205830|0.22988|5,982,007,06|7.97|2.33000|18.57
6697 JP|2287830857|0.01157|264,544,399|7.83|1.95000|15.27
ADM US|2486338542|1.79179|44,542,072,6|9.93|1.19000|11.82
BAC US|3213402058|1.79179|575,672,159|14.82|1.17000|17.34
BK US|5526522462|1.79179|99,023,875,0|13.74|1.45000|19.92
BMY US|1134764864|1.79179|203,326,440|13.34|6.56000|87.51
CMCSA US|1628575477|1.79179|291,807,109|11.28|1.90000|21.43
COP US|1256911500|1.79179|225,212,597|13.25|2.51000|33.26
EOG US|6943169390|1.79179|124,384,974|9.73|2.45000|23.84
EPD US|6358983639|1.79179|113,919,446|10.88|2.26000|24.59
ET US|5783575087|1.79179|103,611,160|13.98|1.83000|25.58
ETR US|3129284898|1.79179|56,060,280,1|12.03|2.03000|24.42
FITB US|2894064924|1.79179|51,846,378,8|12.42|1.55000|19.25
GILD US|1123231870|1.79179|201,223,906|14.60|6.12000|89.35
HBAN US|2257668897|1.79179|40,445,518,6|13.00|1.23000|15.99
HPE US|2597337278|1.79179|46,530,584,4|12.12|1.18000|14.30
KMB US|4496382428|1.79179|80,565,891,9|12.05|34.02000|409.94
LYB US|2772449052|1.79179|49,676,564,2|12.29|1.99000|24.46
MET US|541126571|1.79179|96,958,711,8|10.22|2.02000|20.64
MPC US|4806693087|1.79179|86,126,018,3|12.33|2.32000|28.61
MPLX US|4623369402|1.79179|82,841,236,4|10.28|3.36000|34.54`.split('\n').map(r => r.split('|'));
rows.forEach(([sec, price, fx, prin, cp, cfx, cost], i) => {
  const row = line('data' + (i === 4 ? ' s' : ''));
  const num = el('num', '', row);
  num.innerHTML = `<span data-w="18">${11 + i})</span>`;
  [['', ''], ['e', sec], ['', sec.split(' ')[0]], ['e r', '1.0000'], ['e cut', price], ['', 'USER'], ['r', fx], ['fit', prin], ['', ''], ['fit', prin],
   ['e r', cp], [cfx.length > 7 ? 'e cut' : 'e r', cfx], ['r', cost], ['', ''], ['r', cost]]
    .forEach(([c, t]) => el(c, t, row));
  el('r', '', row).innerHTML = '<span data-w="85">11/01/17</span>';
  el('', '', row);
});
const last = line('data');
for (let i = 0; i < 18; i++) el([2, 4, 5, 11, 12].includes(i) ? 'e' : '', '', last);

// Tighten or loosen each label to the width of its slot
document.querySelectorAll('[data-w]').forEach(n => {
  const range = document.createRange();
  range.selectNodeContents(n);
  const real = range.getBoundingClientRect().width;
  n.style.letterSpacing = ((+n.dataset.w - real) / n.textContent.length) + 'px';
});
```
